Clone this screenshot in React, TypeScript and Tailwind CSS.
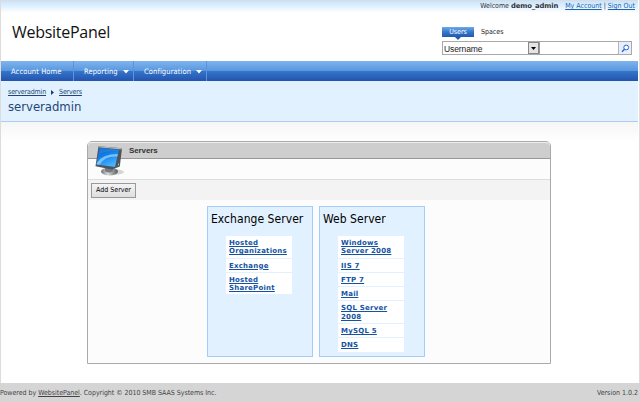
import React from "react";

const tahoma = "font-['DejaVu_Sans_Condensed','DejaVu_Sans',sans-serif] [font-stretch:condensed]";

function NavItem({ label, width, menu = false }: { label: string; width: string; menu?: boolean }) {
  return (
    <a className={`${width} flex h-5 shrink-0 items-center justify-between border-r border-[#5b93dc] pl-[10px] pr-1 pt-px text-[7.5px] tracking-[0.1px] text-white`}>
      <span className="whitespace-nowrap">{label}</span>
      {menu && (
        <svg width="6" height="4" viewBox="0 0 6 4"><path d="M0 0h6L3 3.6z" fill="#fff" /></svg>
      )}
    </a>
  );
}

function MonitorIcon() {
  return (
    <svg className="absolute left-[7px] top-[4px]" width="30" height="31" viewBox="0 0 30 31">
      <defs>
        <linearGradient id="screen" x1="0" y1="0" x2="0.5" y2="1">
          <stop offset="0" stopColor="#0757b8" />
          <stop offset="0.5" stopColor="#1480ea" />
          <stop offset="1" stopColor="#49b2ff" />
        </linearGradient>
        <linearGradient id="stand" x1="0" y1="0" x2="1" y2="0">
          <stop offset="0" stopColor="#6d7173" />
          <stop offset="0.4" stopColor="#d8dbdc" />
          <stop offset="1" stopColor="#55595b" />
        </linearGradient>
      </defs>
      <ellipse cx="18" cy="26" rx="11" ry="3" fill="#bbb" opacity="0.6" />
      <ellipse cx="14.5" cy="25.5" rx="8.5" ry="4" fill="url(#stand)" />
      <path d="M10 19L18 21L18 25Q14 28 10 25Z" fill="#777c80" />
      <path d="M3.5 .3L27 2.3L24.8 20.5L17 23.5L.5 20.3Z" fill="#4d555c" />
      <path d="M3.5 .3L27 2.3L26.5 3.5L4.3 1.6Z" fill="#aeb6ba" />
      <path d="M4.3 1.7L23.8 3.8L20 21L1.6 18.5Z" fill="url(#screen)" />
      <path d="M4 9Q8 4.5 23.5 5.5L23.8 3.8L4.6 2Z" fill="#2685df" opacity="0.65" />
      <path d="M1.8 17Q7 8 22.9 8L22.4 10.5Q10 9.5 4.5 18.8L1.6 18.5Z" fill="#8ed0ff" opacity="0.8" />
      <path d="M23 17.5h1v2h-1z" fill="#72df79" />
    </svg>
  );
}

function ServerBox({ title, items }: { title: string; items: string[][] }) {
  return (
    <section className="h-[151px] w-[106px] border border-[#a3cbfb] bg-[#e2f1ff] pl-[3px] pt-1">
      <h2 className="h-[25px] whitespace-nowrap pt-px text-[12px] leading-[15px] tracking-[0.05px] text-black">{title}</h2>
      <ul className="ml-[15px] flex w-[66px] flex-col gap-px">
        {items.map((lines) => (
          <li key={lines.join(" ")} className="bg-white pb-[2px] pl-[3px] pt-[3px] font-['DejaVu_Sans',sans-serif] text-[7px] font-bold leading-[8.3px] tracking-[0.22px] text-[#1553a2] underline [font-stretch:normal]">
            {lines.map((line) => (
              <span key={line} className="block whitespace-nowrap">{line}</span>
            ))}
          </li>
        ))}
      </ul>
    </section>
  );
}

export default function App() {
  return (
    <div className={`${tahoma} flex h-[402px] w-[640px] flex-col overflow-hidden bg-white text-[7px]`}>
      <div className="flex h-[383px] flex-col border-x border-[#dcdcdc] pr-px">
        <header className="h-[61px] shrink-0">
          <div className="flex h-[13px] items-start justify-end border-t border-[#dcdcdc] bg-linear-to-b from-[#c7e4ff] to-white pr-[3px] pt-px text-[7px] leading-[9px] text-[#333]">
            <span>Welcome <b className="font-['DejaVu_Sans',sans-serif] text-[6.8px] tracking-[-0.12px] [font-stretch:normal]">demo_admin</b></span>
            <a className="ml-[7px] text-[#1764b0] underline">My Account</a>
            <span className="px-[2px]">|</span>
            <a className="text-[#1764b0] underline">Sign Out</a>
          </div>
          <div className="flex h-12 justify-between pl-[11px] pr-[6px]">
            <h1 className="pt-[9px] font-['Open_Sans',sans-serif] text-[16px] leading-5 tracking-[-0.28px] text-[#111] [font-stretch:normal]">WebsitePanel</h1>
            <div className="w-[190px] pt-[14px]">
              <div className="flex h-[14px] items-start">
                <div className="relative flex h-[10px] w-8 items-center justify-center bg-linear-to-b from-[#6daae9] via-[#3478cb] to-[#2358ae] pt-px text-[7px] text-white">
                  Users
                  <svg className="absolute left-[13px] top-[10px]" width="6" height="3" viewBox="0 0 6 3"><path d="M0 0h6L3 3z" fill="#2358ae" /></svg>
                </div>
                <span className="ml-[7px] pt-px text-[7px] leading-[9px] text-[#222]">Spaces</span>
              </div>
              <div className="flex h-[14px] border border-[#a9a9a9]">
                <div className="flex w-[85px] items-center pl-px pt-[2px] font-['Liberation_Sans',sans-serif] text-[8.5px] tracking-[-0.1px] text-[#222]">Username</div>
                <div className="flex w-[11px] items-center justify-center border border-[#888] bg-[#e4e4e4]">
                  <svg width="5" height="3" viewBox="0 0 5 3"><path d="M0 0h5L2.5 3z" /></svg>
                </div>
                <div className="flex-1 border-l border-[#999]" />
                <div className="flex w-[13px] items-center justify-center border-l border-[#b5b5b5] bg-[#e7effb]">
                  <svg width="9" height="9" viewBox="0 0 9 9" fill="none" stroke="#2766cd"><circle cx="5.2" cy="3.5" r="2.4" fill="#fff" strokeWidth="1" /><path d="M3.5 5.2L1 7.7" strokeWidth="1.5" /></svg>
                </div>
              </div>
            </div>
          </div>
        </header>
        <nav className="flex h-5 shrink-0 bg-[linear-gradient(180deg,#7fb5ee_0%,#5a97de_48%,#3375ca_52%,#2552ad_100%)]">
          <NavItem label="Account Home" width="w-[73px]" />
          <NavItem label="Reporting" width="w-[60px]" menu />
          <NavItem label="Configuration" width="w-[73px]" menu />
        </nav>
        <div className="h-[41px] shrink-0 border-b border-[#a9cdf8] bg-[#e2f1ff] pl-[7px] pt-[6px] text-[#1f4776]">
          <div className="flex h-[10px] items-center text-[7px] leading-[9px] tracking-[-0.15px]">
            <a className="underline">serveradmin</a>
            <svg className="mx-[5px]" width="3" height="5" viewBox="0 0 3 5"><path d="M0 0L3 2.5L0 5z" fill="#173c77" /></svg>
            <a className="underline">Servers</a>
          </div>
          <h2 className="pt-px text-[13px] leading-[17px] tracking-[-0.03px]">serveradmin</h2>
        </div>
        <div className="h-[19px] shrink-0 bg-linear-to-b from-[#f5f5f5] to-white" />
        <main className="ml-[86px] h-[223px] w-[464px] shrink-0 rounded-t-[5px] border border-[#aaa] bg-[#fcfcfc]">
          <div className="relative h-[17px] rounded-t-[4px] border-b border-[#999] bg-[#cecece] pl-[41px] pt-[3px] font-['Liberation_Sans',sans-serif] text-[8px] font-bold leading-[11px] tracking-[-0.1px] text-[#333] shadow-[inset_0_1px_0_#eee]">
            Servers
            <MonitorIcon />
          </div>
          <div className="h-5" />
          <div className="flex h-[21px] items-center border-t border-[#ddd] bg-[#f3f3f3] pl-[3px]">
            <button className="flex h-[15px] w-[45px] items-center justify-center whitespace-nowrap border border-[#999] bg-linear-to-b from-[#f4f4f4] to-[#dedede] text-[7px] text-black">Add Server</button>
          </div>
          <div className="flex gap-[6px] pl-[119px] pt-[6px]">
            <ServerBox title="Exchange Server" items={[["Hosted", "Organizations"], ["Exchange"], ["Hosted", "SharePoint"]]} />
            <ServerBox title="Web Server" items={[["Windows", "Server 2008"], ["IIS 7"], ["FTP 7"], ["Mail"], ["SQL Server", "2008"], ["MySQL 5"], ["DNS"]]} />
          </div>
        </main>
      </div>
      <footer className="flex h-[19px] justify-between bg-[#d5d5d5] pr-[2px] pt-[5px] text-[7px] leading-[10px] text-[#444]">
        <span className="tracking-[-0.03px]">Powered by <a className="underline">WebsitePanel</a>. Copyright © 2010 SMB SAAS Systems Inc.</span>
        <span>Version 1.0.2</span>
      </footer>
    </div>
  );
}
